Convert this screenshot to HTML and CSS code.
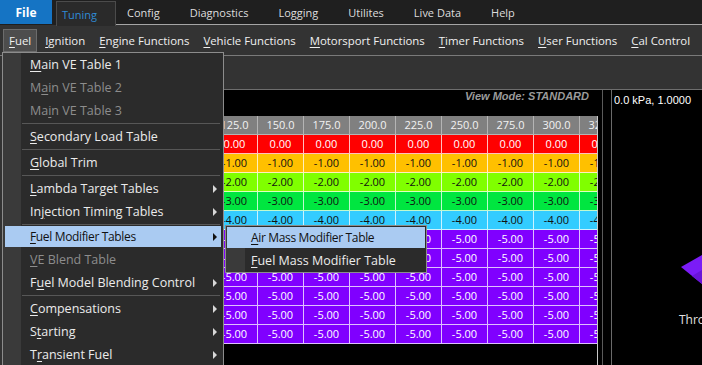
FILE: index.html
```html
<!DOCTYPE html>
<html lang="en">

<head>
    <meta charset="UTF-8">
    <title>Tuning - Fuel</title>
    <link rel="stylesheet" href="styles.css">
</head>

<body>
    <header class="topbar">
        <div class="file-btn">File</div>
        <div class="tab">Tuning</div>
        <nav class="top-menu">
            <span>Config</span>
            <span>Diagnostics</span>
            <span>Logging</span>
            <span>Utilites</span>
            <span>Live Data</span>
            <span>Help</span>
        </nav>
    </header>

    <nav class="subbar">
        <span class="sub-item open"><u>F</u>uel</span>
        <span class="sub-item"><u>I</u>gnition</span>
        <span class="sub-item"><u>E</u>ngine Functions</span>
        <span class="sub-item"><u>V</u>ehicle Functions</span>
        <span class="sub-item"><u>M</u>otorsport Functions</span>
        <span class="sub-item"><u>T</u>imer Functions</span>
        <span class="sub-item"><u>U</u>ser Functions</span>
        <span class="sub-item"><u>C</u>al Control</span>
    </nav>

    <main class="workspace">
        <aside class="dock"></aside>
        <section class="doc">
            <div class="doc-toolbar"></div>
            <div class="panels">
                <div class="map-panel">
                    <div class="view-mode">View Mode: STANDARD</div>
                    <div class="grid">
                        <div id="grid-rows" class="grid-rows"></div>
                    </div>
                </div>
                <div class="splitter"></div>
                <div class="graph-panel">
                    <div class="graph-readout">0.0 kPa, 1.0000</div>
                    <svg class="graph" width="90" height="275" viewBox="0 0 90 275">
                        <polygon points="69,177 90,165 90,194" fill="#7b1cf6" />
                        <polygon points="80,186 90,180 90,194" fill="#6a14d8" />
                        <text x="67" y="234" class="axis-label">Thro</text>
                    </svg>
                </div>
            </div>
        </section>
    </main>

    <!-- Fuel dropdown -->
    <div class="dropdown">
        <div class="menu-item"><u>M</u>ain VE Table 1</div>
        <div class="menu-item disabled">M<u>a</u>in VE Table 2</div>
        <div class="menu-item disabled">Ma<u>i</u>n VE Table 3</div>
        <div class="separator"></div>
        <div class="menu-item"><u>S</u>econdary Load Table</div>
        <div class="separator"></div>
        <div class="menu-item"><u>G</u>lobal Trim</div>
        <div class="separator"></div>
        <div class="menu-item has-sub"><u>L</u>ambda Target Tables</div>
        <div class="menu-item has-sub">In<u>j</u>ection Timing Tables</div>
        <div class="separator"></div>
        <div class="menu-item has-sub active"><u>F</u>uel Modifier Tables</div>
        <div class="menu-item disabled"><u>V</u>E Blend Table</div>
        <div class="menu-item has-sub">F<u>u</u>el Model Blending Control</div>
        <div class="separator"></div>
        <div class="menu-item has-sub"><u>C</u>ompensations</div>
        <div class="menu-item has-sub">S<u>t</u>arting</div>
        <div class="menu-item has-sub">T<u>r</u>ansient Fuel</div>
    </div>

    <div class="flyout">
        <div class="menu-item active"><u>A</u>ir Mass Modifier Table</div>
        <div class="menu-item"><u>F</u>uel Mass Modifier Table</div>
    </div>

    <script>
        const loads = ['125.0', '150.0', '175.0', '200.0', '225.0', '250.0', '275.0', '300.0', '325.0'];
        const rows = [
            { value: '0.00', tone: 'red' },
            { value: '-1.00', tone: 'amber' },
            { value: '-2.00', tone: 'lime' },
            { value: '-3.00', tone: 'green' },
            { value: '-4.00', tone: 'cyan' },
            { value: '-5.00', tone: 'purple' },
            { value: '-5.00', tone: 'purple' },
            { value: '-5.00', tone: 'purple' },
            { value: '-5.00', tone: 'purple' },
            { value: '-5.00', tone: 'purple' },
            { value: '-5.00', tone: 'purple' }
        ];

        function renderGrid() {
            const container = document.getElementById('grid-rows');
            const header = `<div class="row head">${loads.map(l => `<div class="cell">${l}</div>`).join('')}</div>`;
            container.innerHTML = header + rows.map(row => `
                <div class="row ${row.tone}">
                    ${loads.map(() => `<div class="cell">${row.value}</div>`).join('')}
                </div>
            `).join('');
        }

        renderGrid();
    </script>
</body>

</html>
```

FILE: styles.css
```css
body {
    margin: 0;
    width: 702px;
    height: 365px;
    overflow: hidden;
    position: relative;
    background-color: #333;
    color: #eee;
    font-family: "Open Sans", "Noto Sans", sans-serif;
}

u {
    text-decoration-thickness: 1px;
    text-underline-offset: 2px;
}

/* top menu */

.topbar {
    display: flex;
    height: 25px;
    background-color: #1f1f1f;
    font-size: 11px;
}

.file-btn {
    width: 52px;
    height: 24px;
    display: flex;
    align-items: center;
    justify-content: center;
    background-color: #1574c4;
    color: #fff;
    font-weight: bold;
    font-size: 12px;
}

.tab {
    width: 53px;
    height: 24px;
    margin-left: 4px;
    margin-top: 1px;
    padding-left: 5px;
    display: flex;
    align-items: center;
    border: 1px solid #4b4b4b;
    border-bottom: none;
    background-color: #2a2a2a;
    color: #2f8ad6;
}

.top-menu {
    flex: 1;
    display: flex;
    align-items: center;
    border-bottom: 1px solid #a5a5a5;
    color: #ddd;
    white-space: nowrap;
}

.top-menu span {
    padding: 0 15px;
}

.top-menu span:first-child {
    padding-left: 11px;
}

/* section bar */

.subbar {
    display: flex;
    align-items: center;
    height: 30px;
    padding-left: 3px;
    border-bottom: 1px solid #7a7a7a;
    font-size: 11.4px;
    color: #f0f0f0;
    white-space: nowrap;
}

.sub-item {
    padding: 2px 5px;
    margin-right: 2px;
    border: 1px solid transparent;
}

.sub-item.open {
    padding: 3px 5px;
    background-color: #4d4d4d;
    border-color: #6c6c6c;
}

/* workspace */

.workspace {
    display: flex;
    height: 309px;
}

.dock {
    width: 223px;
}

.doc {
    flex: 1;
    display: flex;
    flex-direction: column;
    border-left: 1px solid #7a7a7a;
}

.doc-toolbar {
    height: 33px;
}

.panels {
    flex: 1;
    display: flex;
    border-top: 1px solid #6e6e6e;
    background-color: #000;
}

.map-panel {
    width: 378px;
    display: flex;
    flex-direction: column;
    border-right: 1px solid #5a5a5a;
    overflow: hidden;
}

.view-mode {
    height: 26px;
    line-height: 26px;
    padding-right: 13px;
    text-align: right;
    font: italic bold 11px "Liberation Sans", Arial, sans-serif;
    color: #9a9a9a;
}

.grid {
    flex: 1;
    width: 373px;
    border-right: 1px solid #c8c8c8;
    overflow: hidden;
}

.grid-rows {
    width: 414px;
    margin-left: -12px;
}

.row {
    display: grid;
    grid-template-columns: repeat(9, 46px);
    height: 19px;
}

.cell {
    box-sizing: border-box;
    border-right: 1px solid rgba(255, 255, 255, 0.75);
    border-bottom: 1px solid rgba(255, 255, 255, 0.75);
    text-align: center;
    font-size: 11px;
    line-height: 18px;
}

.row.head {
    background-color: #808080;
    color: #f2f2f2;
}

.row.head .cell {
    border-color: #b4b4b4;
}

.red {
    background-color: #ff0000;
    color: #fff;
}

.amber {
    background-color: #ffc000;
    color: #111;
}

.lime {
    background-color: #80ff00;
    color: #111;
}

.green {
    background-color: #00e640;
    color: #111;
}

.cyan {
    background-color: #33ccff;
    color: #111;
}

.purple {
    background-color: #8000ff;
    color: #fff;
}

.splitter {
    width: 8px;
}

.graph-panel {
    flex: 1;
    position: relative;
    border-left: 1px solid #6a6a6a;
}

.graph-readout {
    padding: 4px 2px;
    font: 11px "Liberation Sans", Arial, sans-serif;
    color: #fff;
}

.graph {
    position: absolute;
    left: 0;
    top: 0;
}

.axis-label {
    font: 12px "Open Sans", sans-serif;
    fill: #e0e0e0;
}

/* menus */

.dropdown,
.flyout {
    position: absolute;
    border: 1px solid #8c8c8c;
    font-size: 12.5px;
}

.dropdown {
    left: 2px;
    top: 52px;
    width: 220px;
    background: linear-gradient(to right, #3a3a3a 0 18px, #2b2b2b 18px);
}

.flyout {
    left: 225px;
    top: 225px;
    width: 200px;
    background: linear-gradient(to right, #3a3a3a 0 19px, #2b2b2b 19px);
}

.menu-item {
    height: 23px;
    display: flex;
    align-items: center;
    padding-left: 27px;
    color: #ebebeb;
    white-space: nowrap;
}

.flyout .menu-item {
    padding-left: 25px;
}

.menu-item.disabled {
    color: #8d8d8d;
}

.menu-item.has-sub::after {
    content: "";
    margin-left: auto;
    margin-right: 6px;
    border-left: 4px solid #d8d8d8;
    border-top: 4px solid transparent;
    border-bottom: 4px solid transparent;
}

.menu-item.active {
    height: 21px;
    margin: 1px 2px;
    padding-left: 25px;
    background-color: #aacbf2;
    color: #111;
    font-size: 12px;
    letter-spacing: -0.35px;
}

.menu-item.active::after {
    margin-right: 4px;
    border-left-color: #111;
}

.flyout .menu-item.active {
    margin: 1px;
    padding-left: 24px;
}

.separator {
    height: 1px;
    margin: 1px 3px 1px 19px;
    background-color: #575757;
}
```
